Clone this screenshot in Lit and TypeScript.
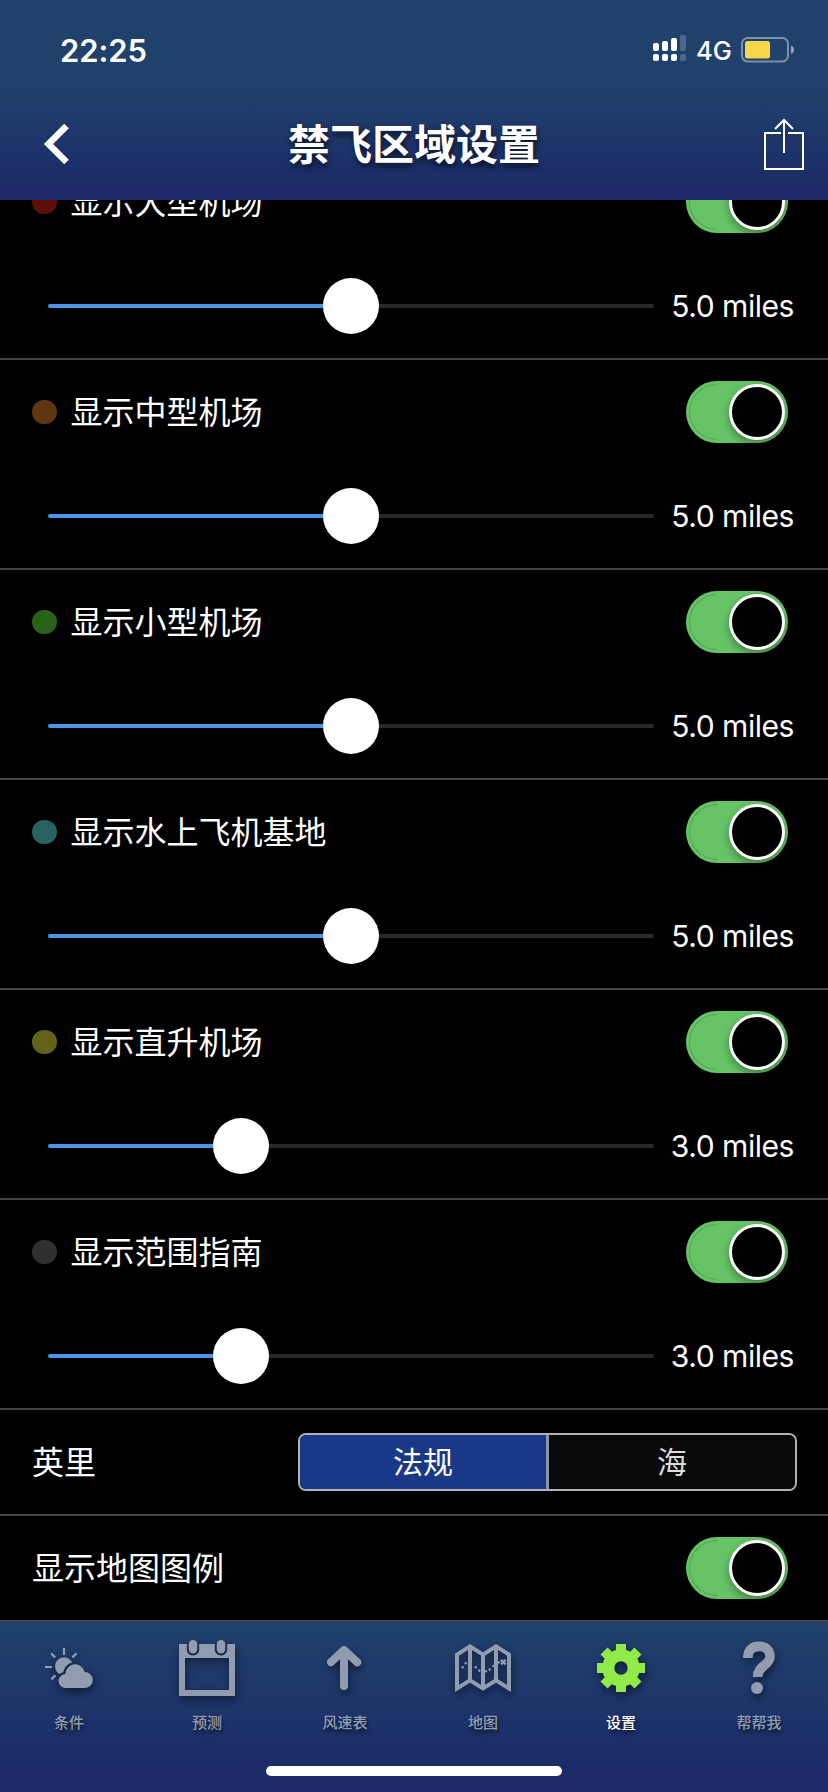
import { LitElement, html, css, svg } from "lit";
import { customElement, property } from "lit/decorators.js";
import { classMap } from "lit/directives/class-map.js";

@customElement("toggle-switch")
class ToggleSwitch extends LitElement {
  static styles = css`
    :host { display: block; flex: none; }
    .track {
      box-sizing: border-box; width: 102px; height: 62px; padding: 3px;
      border-radius: 31px; background: #66c466;
      display: flex; justify-content: flex-end; overflow: hidden;
    }
    .seam {
      flex: none; width: 28px; height: 56px; margin-right: 12px; box-sizing: border-box;
      border: 0.5px solid rgba(40, 110, 40, 0.35); border-right: none;
      border-radius: 28px 0 0 28px;
    }
    .thumb {
      flex: none; box-sizing: border-box; width: 56px; height: 56px; border-radius: 50%;
      border: 3px solid #fff; background: #000;
      box-shadow: 0 4px 8px rgba(0, 0, 0, 0.35);
    }
  `;
  render() {
    return html`<div class="track"><div class="seam"></div><div class="thumb"></div></div>`;
  }
}

@customElement("range-slider")
class RangeSlider extends LitElement {
  @property({ type: Number }) value = 0;
  static styles = css`
    :host { display: block; flex: none; width: 606px; }
    .bar { display: flex; align-items: center; height: 56px; }
    .fill { height: 4px; background: #4a94ea; border-radius: 2px 0 0 2px; }
    .rest { flex: 1; height: 4px; background: #29292a; border-radius: 0 2px 2px 0; }
    .thumb { flex: none; width: 56px; height: 56px; border-radius: 50%; background: #fff; }
  `;
  render() {
    return html`<div class="bar">
      <div class="fill" style="width:${this.value}px"></div>
      <div class="thumb"></div>
      <div class="rest"></div>
    </div>`;
  }
}

const cloud = "M65.7 66A7 7 0 0 1 65.4 52A9.7 9.7 0 0 1 84.6 50A8 8 0 0 1 85 66Z";

const icons = {
  weather: svg`
    <mask id="sunMask"><rect width="138" height="90" fill="#fff"/><path d=${cloud} fill="#000" stroke="#000" stroke-width="4.4"/></mask>
    <g mask="url(#sunMask)"><circle cx="64" cy="44.3" r="9"/></g>
    <path d=${cloud}/>
    <path d="M64 26v7M45 45h7M51.2 31.4l4 4M76.4 31.4l-4 4M51.4 57.4l4-4" fill="none" stroke="currentColor" stroke-width="2.2"/>`,
  calendar: svg`
    <mask id="ringMask"><rect width="138" height="90" fill="#fff"/>
      <rect x="48.8" y="10" width="12.4" height="23.6" rx="6.2" fill="#000"/>
      <rect x="76.8" y="10" width="12.4" height="23.6" rx="6.2" fill="#000"/></mask>
    <path mask="url(#ringMask)" fill-rule="evenodd" d="M41 22h56v52H41zM47 36v32h44V36z"/>
    <rect x="50.8" y="18" width="8.4" height="13.6" rx="4.2"/>
    <rect x="78.8" y="18" width="8.4" height="13.6" rx="4.2"/>`,
  arrow: svg`<path d="M68 64V29M55 40.2L68 28L81.2 40.2" fill="none" stroke="currentColor" stroke-width="8" stroke-linecap="round" stroke-linejoin="round"/>`,
  map: svg`
    <path d="M43 32.6L56 24.4L69 32.6L82 24.4L95 32.6V66.5L82 58.4L69 66.5L56 58.4L43 66.5ZM56 24.4V58.4M69 32.6V66.5M82 24.4V58.4" fill="none" stroke="currentColor" stroke-width="4"/>
    <path d="M48.7 45.3h0M51.7 41.3h0M61.7 45.3h0M65.3 48.6h0M71.9 49.2h0M75.6 47.6h0M79.5 44h0M84.8 40.2h0" fill="none" stroke="currentColor" stroke-width="2.6" stroke-linecap="round"/>
    <path d="M87 37.8l4.6 4.6M91.6 37.8l-4.6 4.6" fill="none" stroke="currentColor" stroke-width="2.4"/>`,
  gear: svg`
    <mask id="hubMask"><rect width="138" height="90" fill="#fff"/><circle cx="69" cy="46" r="6.7" fill="#000"/></mask>
    <g mask="url(#hubMask)"><circle cx="69" cy="46" r="18.8"/>
    ${[0, 45, 90, 135].map((a) => svg`<rect x="64" y="22" width="10" height="48" transform="rotate(${a} 69 46)"/>`)}</g>`,
  help: svg`
    <path d="M57.8 36C57.8 28.5 61.8 24.4 69 24.4C76 24.4 80 28.6 80 34.4C80 43.5 67.6 43.4 67.6 55" fill="none" stroke="currentColor" stroke-width="9.6"/>
    <circle cx="67" cy="66" r="6"/>`,
};

@customElement("app-root")
class AppRoot extends LitElement {
  static styles = css`
    :host {
      display: flex; flex-direction: column; width: 828px; height: 1792px;
      overflow: hidden; background: #000; color: #fff;
      font-family: Inter, "Noto Sans CJK SC", sans-serif;
    }
    svg { display: block; }
    header {
      flex: none; height: 200px;
      background: linear-gradient(#20416c 0, #20416c 84px, #1c2b68 188px);
    }
    .status {
      box-sizing: border-box; height: 100px; padding: 0 33px 0 60px;
      display: flex; align-items: center; justify-content: space-between;
    }
    .time { font-size: 31px; font-weight: 600; letter-spacing: -0.1px; }
    .indicators { display: flex; align-items: center; }
    .signal { margin-bottom: 4px; }
    .net { font-size: 25.5px; font-weight: 500; width: 45px; padding-left: 9px; }
    .nav {
      height: 88px; padding: 0 23px 0 42px; box-sizing: border-box;
      display: grid; grid-template-columns: 42px 1fr 42px; align-items: center;
    }
    h1 {
      margin: 2px 0 0 -19px; text-align: center; font-size: 42px; line-height: 60px; font-weight: 600;
      text-shadow: 1px 4px 6px rgba(0, 0, 0, 0.65);
    }
    .nav .share { justify-self: end; }
    main { flex: none; height: 1422px; overflow: hidden; }
    .list { margin-top: -50px; }
    .zone { box-sizing: border-box; height: 210px; border-bottom: 2px solid #444; padding-top: 21px; }
    .line { display: flex; align-items: center; height: 62px; padding: 0 40px 0 32px; }
    .dot { width: 24.5px; height: 24.5px; border-radius: 50%; margin-right: 14px; }
    .red { background: #5f0e07; }
    .brown { background: #603511; }
    .green { background: #296318; }
    .teal { background: #2a6263; }
    .olive { background: #636219; }
    .gray { background: #303030; }
    .label { flex: 1; font-size: 32px; line-height: 48px; padding-top: 2px; }
    .slide { display: flex; align-items: center; justify-content: space-between; height: 56px; margin-top: 45px; padding: 0 34px 0 48px; }
    .miles { font-size: 30px; letter-spacing: -0.45px; white-space: nowrap; }
    .row {
      box-sizing: border-box; height: 106px; border-bottom: 2px solid #444;
      display: flex; align-items: center; padding: 0 40px 0 32px;
    }
    .row.units { padding-right: 31px; }
    .segments {
      box-sizing: border-box; width: 499px; height: 58px; border: 2px solid #b2b2b4; border-radius: 8px;
      display: flex; overflow: hidden; font-size: 30px; line-height: 54px; text-align: center;
    }
    .seg { flex: 1; background: #090909; color: #dcdcdc; }
    .seg.on { background: #1a3888; color: #fff; border-right: 3px solid #8f93a3; }
    footer {
      flex: none; height: 170px; background: linear-gradient(#20416c, #1c2b68 150px);
      display: flex; flex-direction: column; align-items: center;
    }
    .tabs { display: flex; width: 828px; height: 144px; }
    .tab { width: 138px; display: flex; flex-direction: column; align-items: center; color: #929cb0; }
    .tab svg { fill: currentColor; filter: drop-shadow(1px 4px 4px rgba(0, 0, 0, 0.5)); }
    .tab span { font-size: 15px; line-height: 22px; font-weight: 500; text-shadow: 1px 3px 4px rgba(0, 0, 0, 0.6); }
    .tab.active { color: #90ea47; }
    .tab.active span { color: #fff; }
    .home { width: 296px; height: 10px; border-radius: 5px; background: #fff; }
  `;

  zones = [
    ["red", "显示大型机场", 275, "5.0 miles"],
    ["brown", "显示中型机场", 275, "5.0 miles"],
    ["green", "显示小型机场", 275, "5.0 miles"],
    ["teal", "显示水上飞机基地", 275, "5.0 miles"],
    ["olive", "显示直升机场", 165, "3.0 miles"],
    ["gray", "显示范围指南", 165, "3.0 miles"],
  ];

  tabs = [
    [icons.weather, "条件"],
    [icons.calendar, "预测"],
    [icons.arrow, "风速表"],
    [icons.map, "地图"],
    [icons.gear, "设置"],
    [icons.help, "帮帮我"],
  ];

  render() {
    return html`
      <header>
        <div class="status">
          <div class="time">22:25</div>
          <div class="indicators">
            <svg class="signal" width="34" height="28" viewBox="0 0 34 28" fill="#fff">
              <rect x="0" y="9" width="6" height="8" rx="2"/><rect x="9" y="7" width="6" height="10" rx="2"/>
              <rect x="18" y="4" width="6" height="13" rx="2"/><rect x="27" y="1" width="6" height="16" rx="2" opacity=".2"/>
              <rect x="0" y="20" width="6" height="7" rx="2"/><rect x="9" y="20" width="6" height="7" rx="2"/>
              <rect x="18" y="20" width="6" height="7" rx="2"/><rect x="27" y="20" width="6" height="7" rx="2" opacity=".2"/>
            </svg>
            <div class="net">4G</div>
            <svg width="54" height="26" viewBox="0 0 54 26">
              <rect x="1" y="1" width="46" height="23.4" rx="5.5" fill="none" stroke="#fff" stroke-opacity=".42" stroke-width="2"/>
              <rect x="4" y="4" width="25" height="17.4" rx="2.5" fill="#f8d74a"/>
              <path d="M50 8.6c2 .6 3 2.2 3 4.2s-1 3.6-3 4.200z" fill="#fff" opacity=".5"/>
            </svg>
          </div>
        </div>
        <div class="nav">
          <svg width="42" height="42" viewBox="0 0 42 42"><path d="M24.5 3L6.500 21L24.5 39" fill="none" stroke="#fff" stroke-width="6.5"/></svg>
          <h1>禁飞区域设置</h1>
          <svg class="share" width="42" height="54" viewBox="0 0 42 54" fill="none" stroke="#fff" stroke-width="2">
            <path d="M18 16H2v36h38V16H25"/><path d="M21 36V3M12 12l9-9l9 9"/>
          </svg>
        </div>
      </header>
      <main>
        <div class="list">
          ${this.zones.map(([color, label, value, text]) => html`
            <section class="zone">
              <div class="line">
                <div class=${classMap({ dot: true, [color as string]: true })}></div>
                <div class="label">${label}</div>
                <toggle-switch></toggle-switch>
              </div>
              <div class="slide"><range-slider .value=${value as number}></range-slider><div class="miles">${text}</div></div>
            </section>`)}
          <div class="row units">
            <div class="label">英里</div>
            <div class="segments"><div class="seg on">法规</div><div class="seg">海</div></div>
          </div>
          <div class="row"><div class="label">显示地图图例</div><toggle-switch></toggle-switch></div>
        </div>
      </main>
      <footer>
        <div class="tabs">
          ${this.tabs.map(([icon, label]) => html`
            <div class=${classMap({ tab: true, active: label === "设置" })}>
              <svg width="138" height="90" viewBox="0 0 138 90">${icon}</svg><span>${label}</span>
            </div>`)}
        </div>
        <div class="home"></div>
      </footer>`;
  }
}
